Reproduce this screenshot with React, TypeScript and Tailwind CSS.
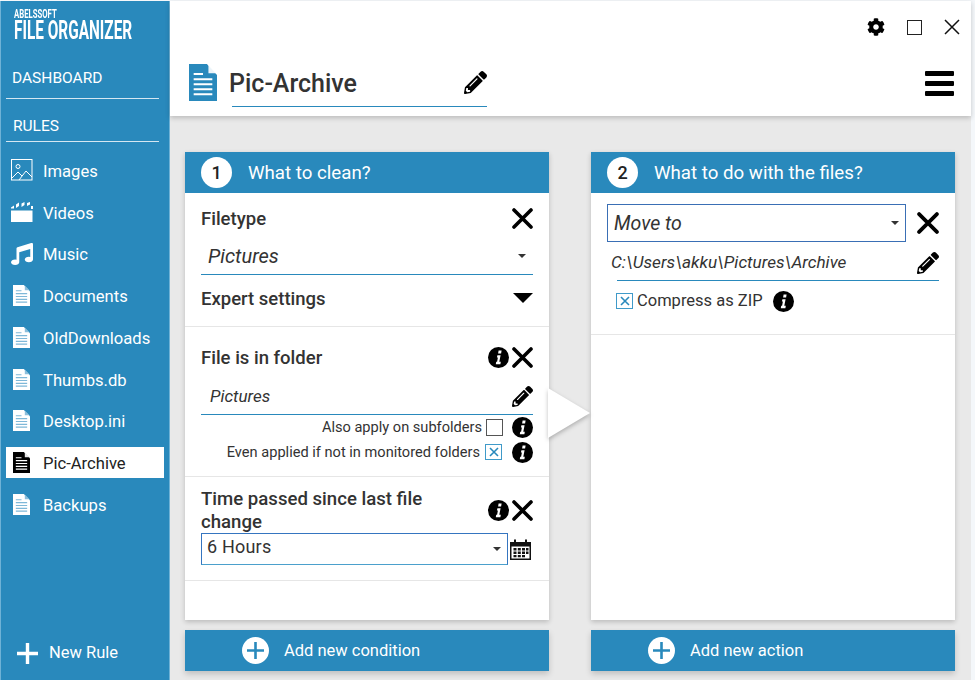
import { FaCog, FaMusic, FaPencilAlt } from 'react-icons/fa';

const RULES = ['Documents', 'OldDownloads', 'Thumbs.db', 'Desktop.ini', 'Pic-Archive', 'Backups'];

function DocIcon({ className, lines }: { className: string; lines: string }) {
  return (
    <svg className={className} viewBox="0 0 18 22" preserveAspectRatio="none">
      <path d="M0 0h11.5l6.5 6.5V22H0z" fill="currentColor" />
      <path d="M12.5 0.5l5 5h-5z" fill={lines} opacity={0.9} />
      <path d="M3 6h6M3 9h12M3 12h12M3 15h12M3 18h12" stroke={lines} strokeWidth={1.2} />
    </svg>
  );
}

function ImageIcon() {
  return (
    <svg className="h-[22px] w-[22px] text-white" viewBox="0 0 22 22" fill="none" stroke="currentColor">
      <rect x="0.5" y="0.5" width="20.5" height="20.5" strokeWidth={1} />
      <circle cx="7" cy="7.5" r="2" strokeWidth={1} />
      <path d="M1 19l6-6 4 4M8 21l7-9 6 6" strokeWidth={1} />
    </svg>
  );
}

function ClapIcon() {
  return (
    <svg className="h-[20px] w-[22px] text-white" viewBox="0 0 22 20" fill="currentColor">
      <path d="M0 8.5h21.5V20H0z" />
      <path d="M0 5.5l3-2v3H0zM5 2.5l3-2v3.5l-3 2zM10.5 1.5l3-1.5v3l-3 2zM16 1l3-1v2.5l-3 1.5z" />
      <path d="M20 4h2v3h-2z" />
    </svg>
  );
}

function CloseIcon({ size = 'h-[21px] w-[21px]' }: { size?: string }) {
  return (
    <svg className={`${size} text-black`} viewBox="0 0 21 21" stroke="currentColor" strokeWidth={3.6} strokeLinecap="round">
      <path d="M2 2l17 17M19 2L2 19" />
    </svg>
  );
}

function Info() {
  return (
    <svg className="h-[21px] w-[21px] shrink-0" viewBox="0 0 21 21">
      <circle cx="10.5" cy="10.5" r="10.5" fill="#000" />
      <path d="M10.6 3.6h3l-.5 2.8h-3zM9.4 8.2h3.2l-1.3 6.6h1.5l-.4 2.4H7.8l.4-2.4h.9l.8-4.2H8.9z" fill="#fff" />
    </svg>
  );
}

function Caret() {
  return <span className="h-0 w-0 border-x-[4px] border-t-[4px] border-x-transparent border-t-[#333]" />;
}

function CheckBox({ checked }: { checked?: boolean }) {
  if (!checked) return <span className="block h-[17px] w-[17px] shrink-0 border border-[#555]" />;
  return (
    <span className="flex h-[16px] w-[17px] shrink-0 items-center justify-center border border-[#3f9ac9]">
      <svg className="h-[10px] w-[10px] text-[#2989bc]" viewBox="0 0 10 10" stroke="currentColor" strokeWidth={1.6}>
        <path d="M1 1l8 8M9 1L1 9" />
      </svg>
    </span>
  );
}

function CalendarIcon() {
  return (
    <svg className="h-[21px] w-[21px] text-[#111]" viewBox="0 0 21 21" fill="currentColor">
      <path fillRule="evenodd" d="M0 3h4V0.5h2V3h9V0.5h2V3h4v18H0zM1.5 7.5v12h18v-12z" />
      <path d="M3.5 9h3v2.5h-3zM7.8 9h3v2.5h-3zM12 9h3v2.5h-3zM16 9h2.5v2.5H16zM3.5 12.6h3v2.5h-3zM7.8 12.6h3v2.5h-3zM12 12.6h3v2.5h-3zM16 12.6h2.5v2.5H16zM3.5 16h3v2.3h-3zM7.8 16h3v2.3h-3zM12 16h3v2.3h-3z" />
    </svg>
  );
}

function SideItem({ icon, label, active }: { icon: React.ReactNode; label: string; active?: boolean }) {
  return (
    <div className="flex h-[41.75px] items-center">
      <div className={`flex h-[31px] w-[158px] items-center ${active ? 'bg-white text-[#222]' : 'text-white'}`}>
        <div className="mr-[6px] flex w-[31px] shrink-0 justify-center">{icon}</div>
        <span className="pt-[4px] text-[16.6px]">{label}</span>
      </div>
    </div>
  );
}

function PanelHead({ n, title }: { n: number; title: string }) {
  return (
    <div className="flex h-[41px] shrink-0 items-center bg-[#2989bc] pl-[16px] text-white">
      <span className="flex h-[31px] w-[31px] items-center justify-center rounded-full bg-white text-[18px] font-medium text-[#222]">{n}</span>
      <span className="ml-[16px] mt-[1px] text-[18.7px]">{title}</span>
    </div>
  );
}

function AddButton({ label }: { label: string }) {
  return (
    <div className="flex h-[41px] shrink-0 items-center bg-[#2989bc] pl-[57px] text-white shadow-[0_3px_6px_rgba(0,0,0,0.18)]">
      <span className="flex h-[27px] w-[27px] items-center justify-center rounded-full bg-white">
        <svg className="h-[17px] w-[17px] text-[#2989bc]" viewBox="0 0 17 17" stroke="currentColor" strokeWidth={2.6}>
          <path d="M8.5 0v17M0 8.5h17" />
        </svg>
      </span>
      <span className="ml-[15px] pt-[2px] text-[16.5px]">{label}</span>
    </div>
  );
}

export default function App() {
  return (
    <div className="h-[680px] w-[975px] overflow-hidden bg-[#f4f7fa] pt-px pr-[4px] font-['Roboto',sans-serif] text-[#333]">
      <div className="flex h-[679px]">
        <aside className="flex w-[170px] shrink-0 flex-col border-x border-x-[#6fb2d6] bg-[#2989bc] pl-[5px] pr-[5px] text-white">
          <div className="h-[60px] overflow-hidden pt-[7px] pl-[8px]">
            <div className="origin-left scale-x-[0.62] whitespace-nowrap text-[12.5px] leading-[11px] font-bold">ABELSSOFT</div>
            <div className="origin-left scale-x-[0.615] whitespace-nowrap text-[25px] leading-[23px] font-bold">FILE ORGANIZER</div>
          </div>
          <div className="mr-[5px] flex h-[38px] items-center border-b border-white/80 pb-[2px] pl-[6px] text-[15.5px] leading-none">DASHBOARD</div>
          <div className="mr-[5px] flex h-[43px] items-center border-b border-white/80 pl-[7px] pt-[13px] text-[15.5px] leading-none">RULES</div>
          <div className="mt-[7.5px]">
            <SideItem icon={<ImageIcon />} label="Images" />
            <SideItem icon={<ClapIcon />} label="Videos" />
            <SideItem icon={<FaMusic className="text-[22px] text-white" />} label="Music" />
            {RULES.map((r) => (
              <SideItem
                key={r}
                label={r}
                active={r === 'Pic-Archive'}
                icon={
                  r === 'Pic-Archive'
                    ? <DocIcon className="h-[21px] w-[17px] text-black" lines="#fff" />
                    : <DocIcon className="h-[21px] w-[17px] text-white" lines="#7fb8d8" />
                }
              />
            ))}
          </div>
          <div className="mt-auto mb-[14px] flex items-center pl-[11px]">
            <svg className="h-[21px] w-[21px] text-white" viewBox="0 0 21 21" stroke="currentColor" strokeWidth={3.4}>
              <path d="M10.5 0v21M0 10.5h21" />
            </svg>
            <span className="ml-[11px] text-[16.5px]">New Rule</span>
          </div>
        </aside>

        <main className="flex min-w-0 flex-1 flex-col bg-[#e9e9e9]">
          <header className="relative z-10 h-[115px] shrink-0 bg-white shadow-[0_2px_5px_rgba(0,0,0,0.2)]">
            <div className="flex h-[52px] items-center justify-end gap-[22px] pr-[11px]">
              <FaCog className="text-[18px] text-black" />
              <span className="h-[15px] w-[15px] border-[1.5px] border-[#222]" />
              <svg className="h-[16px] w-[16px] text-[#111]" viewBox="0 0 16 16" stroke="currentColor" strokeWidth={1.5}>
                <path d="M1 1l14 14M15 1L1 15" />
              </svg>
            </div>
            <div className="flex items-start pl-[19px] pr-[17px]">
              <DocIcon className="mt-[11px] h-[37px] w-[28px] text-[#2989bc]" lines="#fff" />
              <div className="ml-[15px] mt-[1px] flex h-[53px] w-[255px] items-center justify-between border-b border-[#2989bc] pt-[8px]">
                <span className="-ml-[3px] text-[25px] font-medium">Pic-Archive</span>
                <FaPencilAlt className="-mt-[4px] text-[23px] text-black" />
              </div>
              <div className="mt-[18px] ml-auto flex w-[29px] flex-col gap-[5px]">
                <span className="h-[5px] rounded-[1px] bg-black" />
                <span className="h-[5px] rounded-[1px] bg-black" />
                <span className="h-[5px] rounded-[1px] bg-black" />
              </div>
            </div>
          </header>

          <div className="flex flex-1 gap-[42px] pt-[36px] pl-[15px]">
            <div className="flex w-[364px] flex-col gap-[10px]">
              <section className="relative flex h-[468px] flex-col bg-white shadow-[0_2px_5px_rgba(0,0,0,0.2)]">
                <PanelHead n={1} title="What to clean?" />
                <div className="h-[134px] border-b border-[#e6e6e6] pl-[16px] pr-[16px]">
                  <div className="flex h-[50px] items-center justify-between">
                    <span className="pt-[4px] text-[18.5px] font-medium">Filetype</span>
                    <CloseIcon />
                  </div>
                  <div className="flex h-[32px] items-center justify-between border-b border-[#2989bc] pl-[7px] pr-[7px] pb-[6px]">
                    <span className="text-[20px] italic">Pictures</span>
                    <Caret />
                  </div>
                  <div className="flex h-[46px] items-center justify-between">
                    <span className="pt-[4px] text-[18.5px] font-medium">Expert settings</span>
                    <span className="h-0 w-0 border-x-[10px] border-t-[10px] border-x-transparent border-t-black" />
                  </div>
                </div>

                <div className="h-[150px] border-b border-[#e6e6e6] pl-[16px] pr-[16px]">
                  <div className="flex h-[60px] items-center justify-between">
                    <span className="pt-[4px] text-[18.5px] font-medium">File is in folder</span>
                    <div className="flex items-center gap-[3px]">
                      <Info />
                      <CloseIcon />
                    </div>
                  </div>
                  <div className="flex h-[28px] items-center justify-between border-b border-[#2989bc] pl-[9px] pb-[8px]">
                    <span className="text-[17px] italic">Pictures</span>
                    <FaPencilAlt className="text-[21px] text-black" />
                  </div>
                  <div className="flex h-[25px] items-center justify-end text-[14.6px]">
                    <span>Also apply on subfolders</span>
                    <span className="ml-[4px]"><CheckBox /></span>
                    <span className="ml-[9px]"><Info /></span>
                  </div>
                  <div className="flex h-[24px] items-center justify-end text-[14.6px]">
                    <span className="pt-[2px]">Even applied if not in monitored folders</span>
                    <span className="ml-[5px]"><CheckBox checked /></span>
                    <span className="ml-[10px]"><Info /></span>
                  </div>
                </div>

                <div className="h-[104px] border-b border-[#e6e6e6] pl-[16px] pr-[16px] pt-[10px]">
                  <div className="flex items-center justify-between">
                    <span className="w-[260px] translate-y-px text-[18.6px] leading-[23px] font-medium">Time passed since last file change</span>
                    <div className="flex items-center gap-[3px]">
                      <Info />
                      <CloseIcon />
                    </div>
                  </div>
                  <div className="flex items-center">
                    <div className="flex h-[32px] w-[307px] items-center justify-between border border-[#3575c0] border-b-[#4ba0cc] pl-[5px] pr-[6px]">
                      <span className="pb-[5px] text-[18px] tracking-[0.2px]">6 Hours</span>
                      <Caret />
                    </div>
                    <span className="ml-[2px] flex"><CalendarIcon /></span>
                  </div>
                </div>

                <div className="absolute top-[236px] left-[363px] drop-shadow-[0_2px_2px_rgba(0,0,0,0.25)]">
                  <div className="h-[50px] w-[42px] bg-white [clip-path:polygon(0_0,100%_50%,0_100%)]" />
                </div>
              </section>
              <AddButton label="Add new condition" />
            </div>

            <div className="flex w-[364px] flex-col gap-[10px]">
              <section className="flex h-[468px] flex-col bg-white shadow-[0_2px_5px_rgba(0,0,0,0.2)]">
                <PanelHead n={2} title="What to do with the files?" />
                <div className="h-[142px] border-b border-[#e6e6e6] pl-[16px] pr-[16px] pt-[11px]">
                  <div className="flex items-center">
                    <div className="flex h-[38px] w-[299px] items-center justify-between border border-[#3a6fb5] pl-[6px] pr-[6px]">
                      <span className="pt-[2px] text-[19.5px] italic">Move to</span>
                      <Caret />
                    </div>
                    <span className="ml-[11px] flex"><CloseIcon size="h-[22px] w-[22px]" /></span>
                  </div>
                  <div className="ml-[10px] flex h-[39px] items-center justify-between border-b border-[#2989bc] pt-[4px]">
                    <span className="-ml-[6px] text-[17.15px] italic">C:\Users\akku\Pictures\Archive</span>
                    <FaPencilAlt className="text-[22px] text-black" />
                  </div>
                  <div className="mt-[8px] flex items-center pl-[9px]">
                    <CheckBox checked />
                    <span className="ml-[4px] text-[16.5px]">Compress as ZIP</span>
                    <span className="ml-[10px]"><Info /></span>
                  </div>
                </div>
              </section>
              <AddButton label="Add new action" />
            </div>
          </div>
        </main>
      </div>
    </div>
  );
}
